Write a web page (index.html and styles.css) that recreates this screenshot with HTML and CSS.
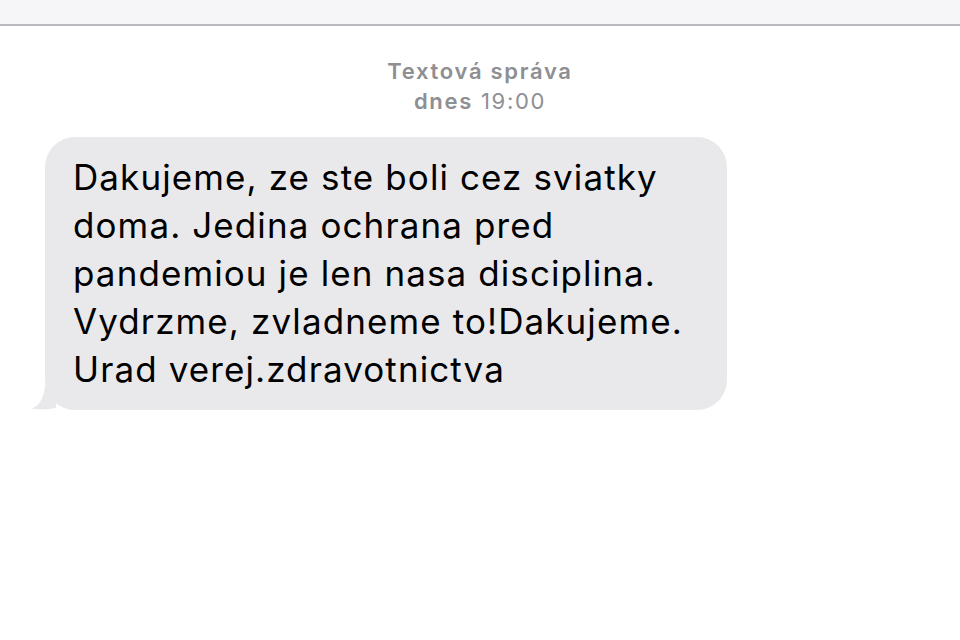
FILE: index.html
```html
<!DOCTYPE html>
<html lang="sk">
<head>
<meta charset="utf-8">
<link rel="stylesheet" href="styles.css">
</head>
<body>
<div class="topbar"></div>
<div class="thread">
  <div class="meta">
    <div class="meta-title">Textová správa</div>
    <div class="meta-time"><b>dnes</b> 19:00</div>
  </div>
  <div class="row">
    <div class="bubble">
      Dakujeme, ze ste boli cez sviatky<br>doma. Jedina ochrana pred<br>pandemiou je len nasa disciplina.<br>Vydrzme, zvladneme to!Dakujeme.<br>Urad verej.zdravotnictva
      <svg class="tail" width="24" height="26" viewBox="0 0 24 26"><path d="M24 0 L24 24 C17 25.5 8 26 0 24.5 C7 22 12 14 13 2 Z" fill="#e9e9eb"/></svg>
    </div>
  </div>
</div>
</body>
</html>
```
FILE: styles.css
```css
html, body { margin: 0; padding: 0; background: #fff; }
body { width: 960px; height: 640px; overflow: hidden; font-family: Inter, "Liberation Sans", sans-serif; }
.topbar { height: 24px; background: #f6f6f8; border-bottom: 2px solid #b9b9bd; }
.thread { display: flex; flex-direction: column; }
.meta { margin-top: 30px; text-align: center; color: #8e8e93; font-size: 22px; line-height: 30px; letter-spacing: 1.7px; }
.meta-title { font-weight: 600; }
.meta-time b { font-weight: 600; }
.row { margin-top: 21px; padding-left: 45px; display: flex; }
.bubble { position: relative; width: 626px; background: #e9e9eb; border-radius: 30px; padding: 16px 28px 17px; font-size: 35px; line-height: 48px; color: #000; letter-spacing: 1.1px; }
.tail { position: absolute; left: -13px; bottom: 0; }
```
